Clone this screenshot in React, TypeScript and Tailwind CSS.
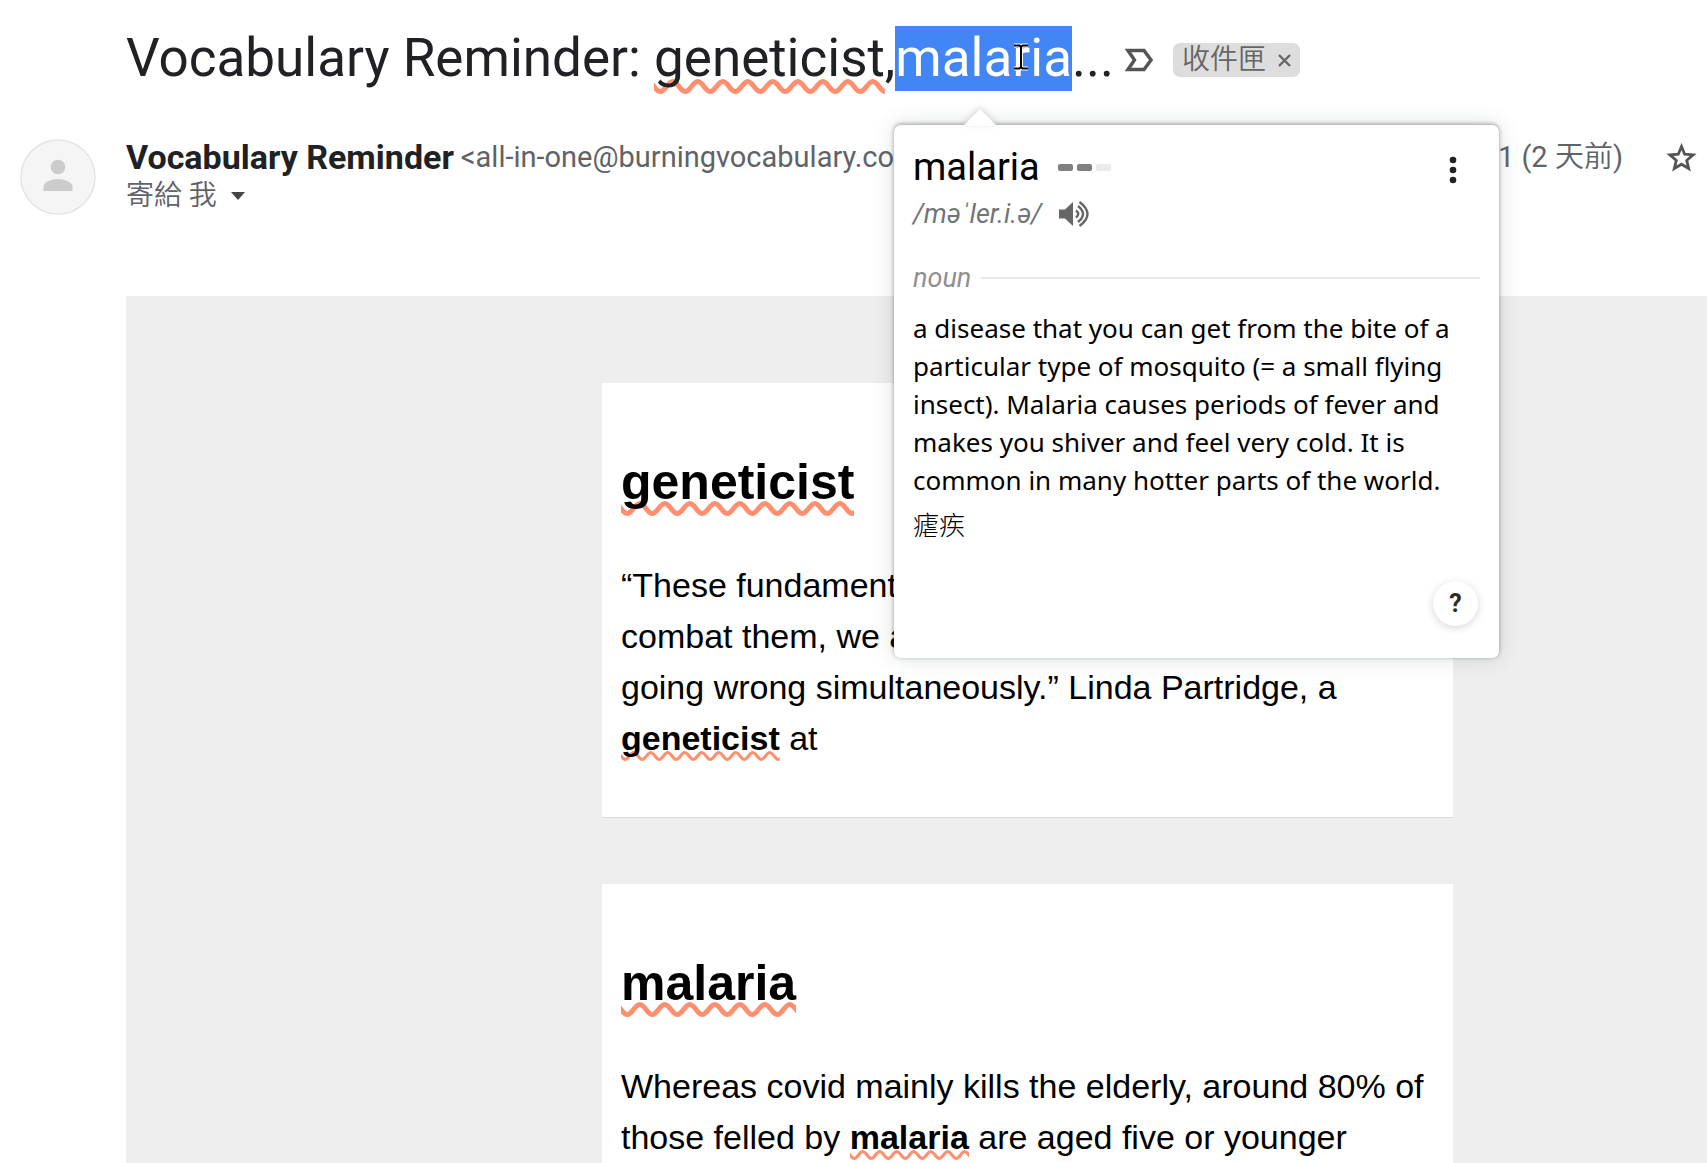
import { useId, type ReactNode } from "react";

function Wave({ large }: { large?: boolean }) {
  const id = useId();
  const period = large ? 25 : 17;
  const height = large ? 15 : 10;
  const stroke = large ? 5 : 3;
  const top = stroke / 2;
  const bottom = height - stroke / 2;
  const q = period / 4;
  const bend = q * 0.8;
  // The wave starts at a crest left of the tile so that tiles join seamlessly.
  const d =
    `M${-q} ${top} C${-q + bend} ${top} ${q - bend} ${bottom} ${q} ${bottom} ` +
    `S${3 * q - bend} ${top} ${3 * q} ${top} S${5 * q - bend} ${bottom} ${5 * q} ${bottom}`;
  return (
    <svg aria-hidden="true" className={large ? "block h-[15px] w-full" : "block h-[10px] w-full"}>
      <defs>
        <pattern id={id} width={period} height={height} patternUnits="userSpaceOnUse">
          <path d={d} fill="none" stroke="#ff8f6f" strokeWidth={stroke} />
        </pattern>
      </defs>
      <rect width="100%" height="100%" fill={`url(#${id})`} />
    </svg>
  );
}

function Word({ children }: { children: ReactNode }) {
  return (
    <strong className="relative isolate font-bold">
      {children}
      <span className="absolute inset-x-0 -bottom-[4px] -z-10">
        <Wave />
      </span>
    </strong>
  );
}

function Card({ title, children }: { title: string; children: ReactNode }) {
  return (
    <article className="border-b border-[#dcdcdc] bg-white px-[19px] pt-[74px] pb-[53px] text-black">
      <h2 className="mb-[53px] text-[50px] leading-[50px] font-bold">
        <span className="relative isolate inline-block">
          {title}
          <span className="absolute inset-x-0 -bottom-[9px] -z-10">
            <Wave large />
          </span>
        </span>
      </h2>
      <p className="text-[34px] leading-[51px]">{children}</p>
    </article>
  );
}

function DefinitionPopup() {
  return (
    <section
      aria-label="malaria"
      className="absolute top-[125px] left-[894px] flex min-h-[533px] w-[605px] flex-col rounded-[7px] bg-white px-[19px] pt-[20px] pb-[32px] text-black shadow-[0_-1px_4px_rgba(0,0,0,0.35),0_0_22px_rgba(40,60,55,0.16)]"
    >
      <svg
        aria-hidden="true"
        viewBox="0 0 34 17"
        className="absolute -top-[16px] left-[69px] h-[17px] w-[34px] drop-shadow-[0_-2px_3px_rgba(0,0,0,0.14)]"
      >
        <path d="M0 17 17 0 34 17Z" fill="#fff" />
      </svg>
      <div className="flex items-center">
        <h2 className="text-[38px] leading-[44px]">malaria</h2>
        <div className="ml-[18px] flex gap-[4px]" aria-hidden="true">
          <span className="h-[7px] w-[15px] rounded-[2px] bg-[#808080]" />
          <span className="h-[7px] w-[15px] rounded-[2px] bg-[#808080]" />
          <span className="h-[7px] w-[15px] rounded-[2px] bg-[#e8eaed]" />
        </div>
        <button aria-label="More" className="mt-[6px] ml-auto flex w-[54px] justify-center">
          <svg viewBox="0 0 8 28" className="h-[28px] w-[8px]" fill="#202124">
            <circle cx="4" cy="4" r="3.3" />
            <circle cx="4" cy="14" r="3.3" />
            <circle cx="4" cy="24" r="3.3" />
          </svg>
        </button>
      </div>
      <div className="mt-[7px] flex items-center">
        <span className="text-[27px] leading-[36px] text-[#70757a] italic">/məˈler.i.ə/</span>
        <button aria-label="Listen" className="ml-[17px]">
          <svg viewBox="0 0 31 26" className="h-[26px] w-[31px]" fill="none" stroke="#666" strokeWidth="2.4">
            <path d="M0 8.500h6l8-7.500v24l-8-7.500H0Z" fill="#666" stroke="none" />
            <path d="M17 9.500q4.500 3.500 0 7" />
            <path d="M19 5q10 8 0 16" />
            <path d="M20.500 1q16 12 0 24" />
          </svg>
        </button>
      </div>
      <div className="mt-[28px] flex items-center gap-[10px]">
        <span className="text-[27px] leading-[36px] text-[#8f8f8f] italic">noun</span>
        <span className="h-[2px] flex-1 bg-[#e8eaea]" />
      </div>
      <p className="mt-[13px] font-['Noto_Sans','Open_Sans',sans-serif] text-[26px] leading-[38px] whitespace-nowrap">
        a disease that you can get from the bite of a
        <br />
        particular type of mosquito (= a small flying
        <br />
        insect). Malaria causes periods of fever and
        <br />
        makes you shiver and feel very cold. It is
        <br />
        common in many hotter parts of the world.
      </p>
      <p
        lang="zh-Hant"
        className="mt-[6px] font-['Noto_Sans_CJK_TC',sans-serif] text-[26px] leading-[38px] font-light"
      >
        瘧疾
      </p>
      <button
        aria-label="Help"
        className="mt-auto mr-[2px] flex size-[45px] items-center justify-center self-end rounded-full bg-white text-[25px] font-bold text-[#2b2b2b] shadow-[0_2px_8px_rgba(0,0,0,0.16)]"
      >
        ?
      </button>
    </section>
  );
}

export default function App() {
  return (
    <main className="relative h-screen overflow-hidden bg-white font-[Roboto,'Noto_Sans_CJK_TC',sans-serif] text-[#202124]">
      <header className="flex items-center pt-[26px] pl-[126px]">
        <h1 className="text-[53px] leading-[65px] whitespace-nowrap">
          Vocabulary Reminder:{" "}
          <span className="relative isolate inline-block">
            geneticist
            <span className="absolute inset-x-0 -bottom-[3px] -z-10">
              <Wave large />
            </span>
          </span>
          ,
          <span className="relative inline-block bg-[#4285f4] text-white">
            malaria
            <svg
              aria-hidden="true"
              viewBox="0 0 16 28"
              className="absolute top-[17px] left-[118px] h-[28px] w-[16px]"
              fill="none"
            >
              <path d="M1 2.500h5.500l1.500 1.500 1.500-1.500H15M8 3v22M1 25.500h5.500L8 24l1.500 1.500H15" stroke="#fff" strokeWidth="4" />
              <path d="M1 2.500h5.500l1.500 1.500 1.500-1.500H15M8 3v22M1 25.500h5.500L8 24l1.500 1.500H15" stroke="#000" strokeWidth="2" />
            </svg>
          </span>
          ...
        </h1>
        <button aria-label="Important" className="mt-[2px] ml-[11px]">
          <svg viewBox="0 0 28 24" className="h-[24px] w-[28px]" fill="none" stroke="#555" strokeWidth="3.400">
            <path d="M3 2.500h16l7 9.500-7 9.500H3L9.500 12Z" />
          </svg>
        </button>
        <div className="mt-[2px] ml-[20px] flex h-[34px] items-center rounded-[7px] bg-[#ddd] px-[9px] text-[#666]">
          <span lang="zh-Hant" className="text-[28px] leading-[34px] font-[350]">
            收件匣
          </span>
          <button aria-label="Remove label" className="mt-[2px] ml-[12px]">
            <svg viewBox="0 0 13 13" className="h-[13px] w-[13px]" stroke="#666" strokeWidth="2.400">
              <path d="M1 1l11 11M12 1L1 12" />
            </svg>
          </button>
        </div>
      </header>

      <section className="mt-[48px] flex pr-[10px] pl-[20px]">
        <svg viewBox="0 0 76 76" className="size-[76px] shrink-0" role="img" aria-label="Vocabulary Reminder">
          <circle cx="38" cy="38" r="37" fill="#f5f5f5" stroke="#e4e4e4" strokeWidth="1.500" />
          <circle cx="38" cy="28" r="7.300" fill="#ccc" />
          <path d="M23.500 52v-4c0-5 8-8 14.500-8s14.500 3 14.500 8v4Z" fill="#ccc" />
        </svg>
        <div className="ml-[30px] min-w-0 flex-1">
          <div className="flex items-center leading-[37px] whitespace-nowrap">
            <h3 className="text-[34px] font-bold">Vocabulary Reminder</h3>
            <span className="ml-[7px] w-[434px] overflow-hidden text-[29px] text-[#5f6368]">
              &lt;all-in-one@burningvocabulary.co
            </span>
            <time className="ml-auto text-[29px] text-[#5f6368]">
              1 (2 <span className="font-[350]">天前</span>)
            </time>
            <button aria-label="Star" className="ml-[43px]">
              <svg viewBox="0 0 31 30" className="h-[30px] w-[31px]" fill="none" stroke="#555" strokeWidth="2.800">
                <path d="M15.500 3.500l3.200 7.700 8.400.7-6.400 5.500 2 8.100-7.200-4.300-7.200 4.300 2-8.100-6.400-5.500 8.400-.7Z" />
              </svg>
            </button>
          </div>
          <button className="flex items-center text-[28px] leading-[39px] font-[350] text-[#5f6368]">
            <span lang="zh-Hant">寄給 我</span>
            <svg viewBox="0 0 14 8" aria-hidden="true" className="ml-[14px] h-[8px] w-[14px]" fill="#444">
              <path d="M0 0h14L7 8Z" />
            </svg>
          </button>
        </div>
      </section>

      <section className="mt-[81px] ml-[126px] bg-[#eee] pt-[87px] font-['Liberation_Sans',Arial,sans-serif]">
        <div className="mr-[254px] ml-[476px] flex flex-col gap-[66px]">
          <Card title="geneticist">
            “These fundament
            <br />
            combat them, we a
            <br />
            going wrong simultaneously.” Linda Partridge, a
            <br />
            <Word>geneticist</Word> at
          </Card>
          <Card title="malaria">
            Whereas covid mainly kills the elderly, around 80% of
            <br />
            those felled by <Word>malaria</Word> are aged five or younger
          </Card>
        </div>
      </section>
      <DefinitionPopup />
    </main>
  );
}
